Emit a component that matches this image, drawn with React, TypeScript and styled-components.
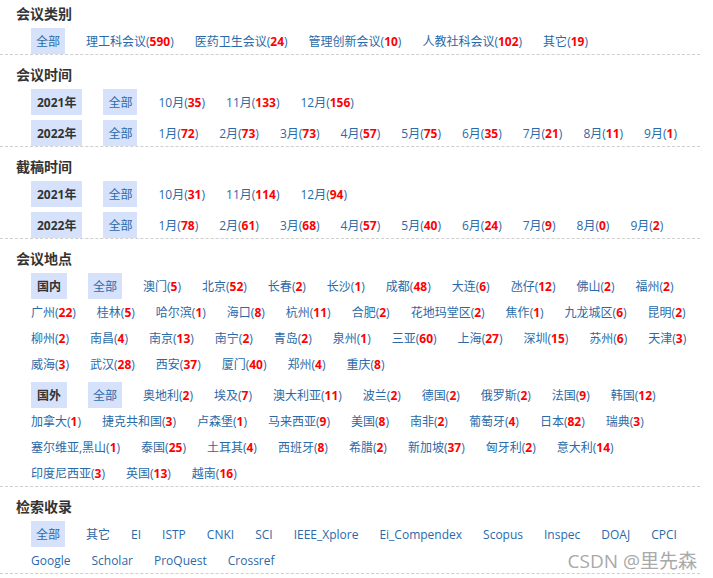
import React from "react";
import styled, { createGlobalStyle } from "styled-components";

const GlobalStyle = createGlobalStyle`
  html, body {
    margin: 0;
    padding: 0;
    background: #fff;
  }
  body {
    font-family: "Open Sans", "Noto Sans CJK SC", sans-serif;
    font-size: 12px;
    color: #333;
  }
`;

type Item = { name: string; count?: number };

const parse = (s: string): Item[] =>
  s.split(" ").map((t) => {
    const m = t.match(/^(.*)\((\d+)\)$/);
    return m ? { name: m[1], count: Number(m[2]) } : { name: t };
  });

const categories = parse("理工科会议(590) 医药卫生会议(24) 管理创新会议(10) 人教社科会议(102) 其它(19)");

const meetingTime = [
  { year: "2021年", months: parse("10月(35) 11月(133) 12月(156)") },
  { year: "2022年", months: parse("1月(72) 2月(73) 3月(73) 4月(57) 5月(75) 6月(35) 7月(21) 8月(11) 9月(1)") },
];

const deadline = [
  { year: "2021年", months: parse("10月(31) 11月(114) 12月(94)") },
  { year: "2022年", months: parse("1月(78) 2月(61) 3月(68) 4月(57) 5月(40) 6月(24) 7月(9) 8月(0) 9月(2)") },
];

const places = [
  {
    label: "国内",
    items: parse(
      "澳门(5) 北京(52) 长春(2) 长沙(1) 成都(48) 大连(6) 氹仔(12) 佛山(2) 福州(2) " +
        "广州(22) 桂林(5) 哈尔滨(1) 海口(8) 杭州(11) 合肥(2) 花地玛堂区(2) 焦作(1) 九龙城区(6) 昆明(2) " +
        "柳州(2) 南昌(4) 南京(13) 南宁(2) 青岛(2) 泉州(1) 三亚(60) 上海(27) 深圳(15) 苏州(6) 天津(3) " +
        "威海(3) 武汉(28) 西安(37) 厦门(40) 郑州(4) 重庆(8)"
    ),
  },
  {
    label: "国外",
    items: parse(
      "奥地利(2) 埃及(7) 澳大利亚(11) 波兰(2) 德国(2) 俄罗斯(2) 法国(9) 韩国(12) " +
        "加拿大(1) 捷克共和国(3) 卢森堡(1) 马来西亚(9) 美国(8) 南非(2) 葡萄牙(4) 日本(82) 瑞典(3) " +
        "塞尔维亚,黑山(1) 泰国(25) 土耳其(4) 西班牙(8) 希腊(2) 新加坡(37) 匈牙利(2) 意大利(14) " +
        "印度尼西亚(3) 英国(13) 越南(16)"
    ),
  },
];

const indexes = parse(
  "其它 EI ISTP CNKI SCI IEEE_Xplore Ei_Compendex Scopus Inspec DOAJ CPCI Google Scholar ProQuest Crossref"
);

function Links({ items }: { items: Item[] }) {
  return (
    <>
      {items.map((it, i) => (
        <Link key={i}>
          {it.name}
          {it.count !== undefined && (
            <>
              (<Count>{it.count}</Count>)
            </>
          )}
        </Link>
      ))}
    </>
  );
}

function YearRows({ rows }: { rows: { year: string; months: Item[] }[] }) {
  return (
    <>
      {rows.map((r) => (
        <Group key={r.year} $nowrap>
          <Tag $label>{r.year}</Tag>
          <Tag>全部</Tag>
          <Links items={r.months} />
        </Group>
      ))}
    </>
  );
}

export default function App() {
  return (
    <>
      <GlobalStyle />
      <Page>
        <Section>
          <Title>会议类别</Title>
          <Group>
            <Tag>全部</Tag>
            <Links items={categories} />
          </Group>
        </Section>

        <Section>
          <Title>会议时间</Title>
          <YearRows rows={meetingTime} />
        </Section>

        <Section>
          <Title>截稿时间</Title>
          <YearRows rows={deadline} />
        </Section>

        <Section>
          <Title>会议地点</Title>
          {places.map((p) => (
            <Group key={p.label}>
              <Tag $label>{p.label}</Tag>
              <Tag>全部</Tag>
              <Links items={p.items} />
            </Group>
          ))}
        </Section>

        <Section>
          <Title>检索收录</Title>
          <Group>
            <Tag>全部</Tag>
            <Links items={indexes} />
          </Group>
        </Section>

        <Watermark>CSDN @里先森</Watermark>
      </Page>
    </>
  );
}

const Page = styled.div`
  position: relative;
  width: 700px;
`;

const Section = styled.div`
  padding-top: 6px;
  border-bottom: 1px dashed #cfcfcf;

  &:first-child {
    padding-top: 0;
  }

  &:last-of-type {
    border-bottom: none;
  }
`;

const Title = styled.h3`
  margin: 0;
  padding-left: 16px;
  height: 28px;
  line-height: 28px;
  font-size: 14px;
  font-weight: bold;
  color: #333;
`;

const Group = styled.div<{ $nowrap?: boolean }>`
  display: flex;
  flex-wrap: ${(p) => (p.$nowrap ? "nowrap" : "wrap")};
  column-gap: 21px;
  padding-left: 31px;
  margin-bottom: 5px;

  &:last-child {
    margin-bottom: 0;
  }
`;

const Tag = styled.span<{ $label?: boolean }>`
  display: inline-flex;
  align-items: center;
  height: 26px;
  padding: 0 ${(p) => (p.$label ? "6px" : "5px")};
  background: #d6e2fc;
  color: ${(p) => (p.$label ? "#333" : "#2a6aa8")};
  font-weight: ${(p) => (p.$label ? "bold" : "normal")};
  white-space: nowrap;
`;

const Link = styled.a`
  display: inline-flex;
  align-items: center;
  height: 26px;
  color: #2a6aa8;
  text-decoration: none;
  white-space: nowrap;
  cursor: pointer;
`;

const Count = styled.b`
  color: #ff0000;
  font-weight: bold;
`;

const Watermark = styled.div`
  position: absolute;
  right: 3px;
  bottom: 1px;
  font-size: 19px;
  line-height: 24px;
  color: #a9a9a9;
  text-shadow: 0 0 2px #fff;
  pointer-events: none;
`;
